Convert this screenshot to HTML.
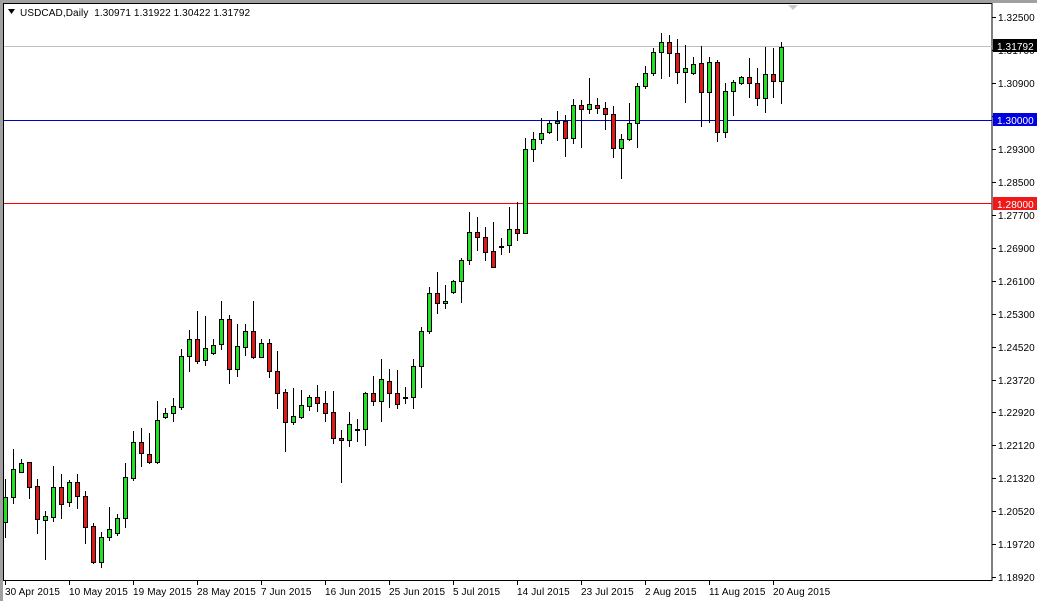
<!DOCTYPE html>
<html><head><meta charset="utf-8"><style>
html,body{margin:0;padding:0;background:#fff;}
body{width:1037px;height:601px;overflow:hidden;position:relative;font-family:"Liberation Sans",sans-serif;}
svg{position:absolute;left:0;top:0;}
text{font-family:"Liberation Sans",sans-serif;font-size:10px;letter-spacing:0.1px;}
</style></head><body>
<svg id="s" width="1037" height="601" xmlns="http://www.w3.org/2000/svg">
<rect x="0" y="0" width="1037" height="601" fill="#fff"/>
<rect x="0" y="0" width="1037" height="3" fill="#a0a0a0"/>
<rect x="0" y="0" width="3" height="601" fill="#a0a0a0"/>
<rect x="3.5" y="3.5" width="988.5" height="577" fill="none" stroke="#000" stroke-width="1"/>
<line x1="4" y1="46.5" x2="992" y2="46.5" stroke="#c0c0c0"/>
<line x1="4" y1="120.5" x2="992" y2="120.5" stroke="#0000c8"/>
<line x1="4" y1="203.5" x2="992" y2="203.5" stroke="#ff0000"/>
<polygon points="788,5 798,5 793,10" fill="#c8c8c8"/>
<polygon points="8,9 15,9 11.5,14" fill="#000"/>
<text x="20" y="16" fill="#000">USDCAD,Daily&#160; 1.30971 1.31922 1.30422 1.31792</text>
<g id="c"></g>
<g id="ax"></g>
<rect x="993" y="39" width="44" height="13" fill="#000"/>
<text x="997" y="50" fill="#fff">1.31792</text>
<rect x="993" y="113" width="44" height="13" fill="#0000e0"/>
<text x="997" y="124" fill="#fff">1.30000</text>
<rect x="993" y="197" width="44" height="13" fill="#f01818"/>
<text x="997" y="208" fill="#fff">1.28000</text>
</svg>
<script>
var d=[
['g',479,537,497,522],['g',449,503,469,497],['g',459,472,463,472],['r',462,498,462,487],['r',479,533,486,519],
['g',511,559,516,520],['g',466,521,487,517],['r',474,518,487,504],['g',480,506,482,502],['r',474,508,482,496],
['r',491,543,496,527],['r',523,563,526,562],['g',532,567,537,562],['g',507,540,529,537],['g',514,535,518,533],
['g',463,527,477,518],['g',431,480,442,478],['r',428,466,442,453],['r',433,463,454,462],['g',401,463,420,462],
['g',408,418,413,417],['g',398,421,406,413],['g',349,409,356,407],['g',330,371,339,356],['r',311,363,339,361],
['g',316,365,348,360],['g',339,354,345,353],['g',301,349,319,344],['r',315,383,319,369],['g',324,376,346,369],
['g',324,355,331,347],['r',301,358,331,357],['g',339,357,343,357],['r',339,377,343,371],['r',351,408,371,393],
['r',389,451,392,422],['g',388,424,416,422],['g',390,418,405,417],['g',395,410,397,406],['r',385,411,397,403],
['r',391,421,403,413],['r',391,443,412,438],['r',430,482,438,440],['g',412,446,424,440],['g',419,441,429,430],
['g',392,445,393,429],['r',376,405,393,401],['g',359,421,379,401],['r',369,407,381,393],['r',370,408,393,404],
['g',387,403,397,398],['g',359,408,366,397],['g',327,387,331,366],['g',287,333,293,331],['r',272,313,293,303],
['g',285,308,301,303],['g',280,293,281,292],['g',258,302,260,281],['g',212,264,232,260],['r',217,250,232,237],
['r',227,260,237,252],['r',222,267,251,267],['g',238,254,246,247],['g',207,252,229,245],['r',202,240,229,233],
['g',138,233,149,233],['g',132,161,139,149],['g',118,143,133,139],['g',121,133,123,132],['g',111,140,121,123],
['r',115,156,121,138],['g',99,143,105,138],['r',100,147,105,109],['g',78,113,104,109],['r',98,113,105,108],
['r',102,129,108,114],['r',106,157,114,148],['g',134,178,139,148],['g',103,140,123,139],['g',83,147,86,123],
['g',66,88,73,86],['g',48,75,52,73],['g',33,78,42,52],['r',35,76,42,53],['r',39,83,53,72],
['g',45,102,68,72],['g',57,74,64,73],['r',46,126,63,92],['g',57,122,62,92],['r',60,141,62,132],
['g',83,137,91,132],['g',80,115,82,91],['g',76,84,77,83],['r',58,97,77,83],['r',68,105,83,98],
['g',47,112,74,98],['r',48,97,74,81],['g',42,103,47,81]];
var NS='http://www.w3.org/2000/svg',g=document.getElementById('c');
function R(p,x,y,w,h,f){var r=document.createElementNS(NS,'rect');r.setAttribute('x',x);r.setAttribute('y',y);r.setAttribute('width',w);r.setAttribute('height',h);r.setAttribute('fill',f);p.appendChild(r);}
d.forEach(function(c,i){var x=5+8*i;R(g,x,c[1],1,c[2]-c[1]+1,'#000');
var t=c[3],b=c[4];if(b-t<1)b=t+1;R(g,x-2,t,5,b-t+1,'#000');
if(b-t>=2)R(g,x-1,t+1,3,b-t-1,c[0]=='g'?'#22e022':'#e01818');});
var ax=document.getElementById('ax');
var p=[['1.32500',17],['1.31700',50],['1.30900',83],['1.30100',116],['1.29300',149],['1.28500',182],['1.27700',215],['1.26900',248],['1.26100',281],['1.25300',314],['1.24520',347],['1.23720',380],['1.22920',412],['1.22120',445],['1.21320',478],['1.20520',511],['1.19720',544],['1.18920',577]];
p.forEach(function(q){R(ax,992,q[1],4,1,'#000');var t=document.createElementNS(NS,'text');t.setAttribute('x',998);t.setAttribute('y',q[1]+4);t.textContent=q[0];ax.appendChild(t);});
var ds=['30 Apr 2015','10 May 2015','19 May 2015','28 May 2015','7 Jun 2015','16 Jun 2015','25 Jun 2015','5 Jul 2015','14 Jul 2015','23 Jul 2015','2 Aug 2015','11 Aug 2015','20 Aug 2015'];
ds.forEach(function(s,i){var x=5+64*i;R(ax,x,581,1,4,'#000');var t=document.createElementNS(NS,'text');t.setAttribute('x',x);t.setAttribute('y',595);t.textContent=s;ax.appendChild(t);});
</script>
</body></html>
